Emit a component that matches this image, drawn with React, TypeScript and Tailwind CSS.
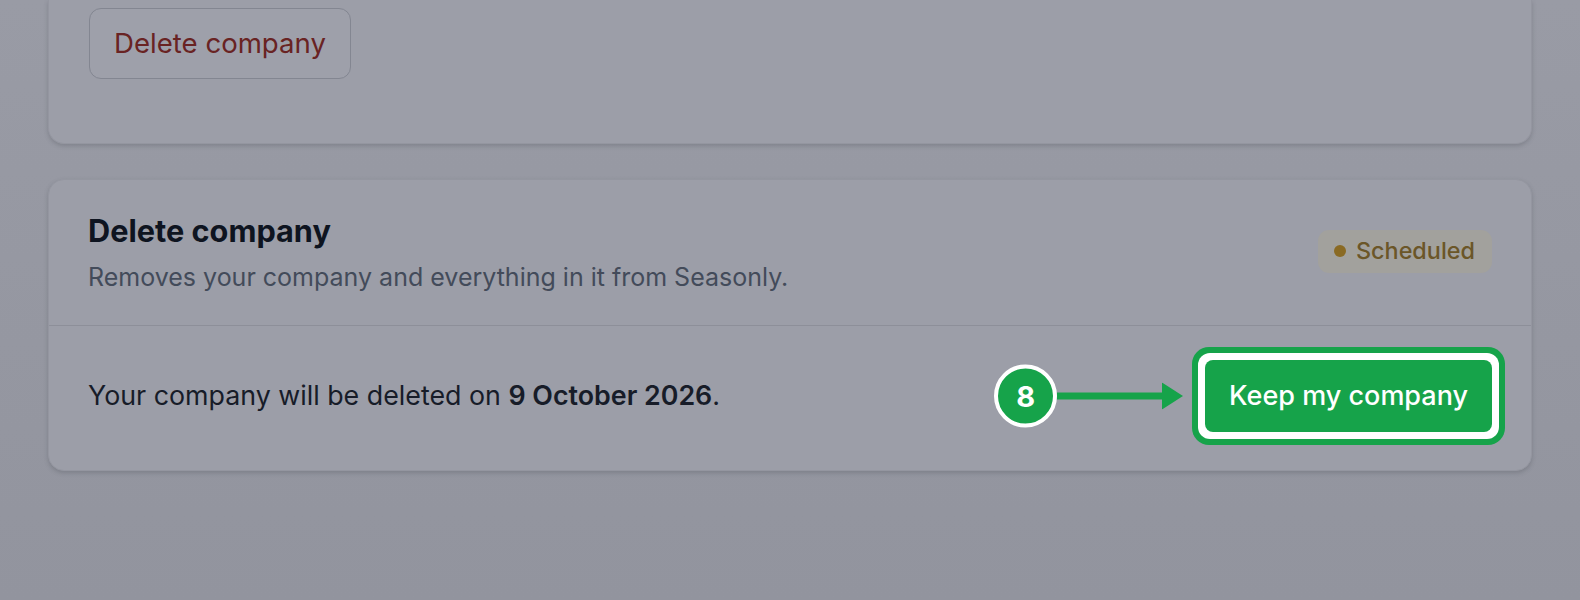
import React from "react";

export default function App() {
  return (
    <div
      className="min-h-[600px] w-full bg-[linear-gradient(to_bottom,#999ba5,#92949e)] px-[48px]"
      style={{ fontFamily: "Inter, 'Noto Sans', sans-serif" }}
    >
      {/* Card 1 (cut off at top) */}
      <div className="rounded-b-[16px] border-x border-b border-[#9496a0] bg-[#9c9ea8] px-[40px] pb-[64px] pt-[8px] shadow-[0_2px_4px_rgba(60,62,72,0.25)]">
        <button className="h-[71px] rounded-[12px] border-[1.5px] border-[#838691] bg-[#9ea0aa] px-[24px] text-[27.6px] text-[#692323]">
          Delete company
        </button>
      </div>

      {/* Card 2 */}
      <div className="mt-[35px] rounded-[16px] border border-[#9496a0] bg-[#9c9ea8] shadow-[0_2px_4px_rgba(60,62,72,0.25)]">
        <div className="flex items-center justify-between border-b border-[#8d8f99] px-[39px] pb-[30px] pt-[33px]">
          <div>
            <h2 className="text-[30.7px] font-bold leading-[36px] text-[#0e1420]">
              Delete company
            </h2>
            <p className="mt-[10px] text-[25px] leading-[36px] text-[#434b5a]">
              Removes your company and everything in it from Seasonly.
            </p>
          </div>
          <div className="-mt-[6px] flex h-[43px] items-center gap-[10px] rounded-[11px] bg-[#a2a19d] pl-[16px] pr-[17px] text-[23.4px] font-medium text-[#6b5628]">
            <span className="h-[12px] w-[12px] rounded-full bg-[#8a6a23]" />
            Scheduled
          </div>
        </div>
        <div className="flex items-center justify-between px-[39px] pb-[38px] pt-[34px]">
          <p className="-mt-[3px] text-[26.8px] leading-[36px] text-[#171c28]">
            Your company will be deleted on{" "}
            <span className="font-semibold">9 October 2026</span>.
          </p>
          <div className="relative">
            {/* annotation */}
            <div className="absolute right-[calc(100%+22px)] top-1/2 flex -translate-y-1/2 items-center">
              <div className="flex h-[63px] w-[63px] items-center justify-center rounded-full border-[4px] border-white bg-[#16a34a] text-[29px] font-bold text-white">
                8
              </div>
              <div className="h-[7px] w-[106px] bg-[#16a34a]" />
              <svg width="21" height="27" viewBox="0 0 21 27" className="-ml-px">
                <polygon points="0,0 21,13.5 0,27" fill="#16a34a" />
              </svg>
            </div>
            <div className="-m-[13px] rounded-[17px] bg-[#16a34a] p-[6px]">
              <div className="rounded-[12px] bg-white p-[7px]">
                <button className="h-[72px] rounded-[8px] bg-[#16a34a] px-[24px] text-[27px] font-medium text-white">
                  Keep my company
                </button>
              </div>
            </div>
          </div>
        </div>
      </div>
    </div>
  );
}
